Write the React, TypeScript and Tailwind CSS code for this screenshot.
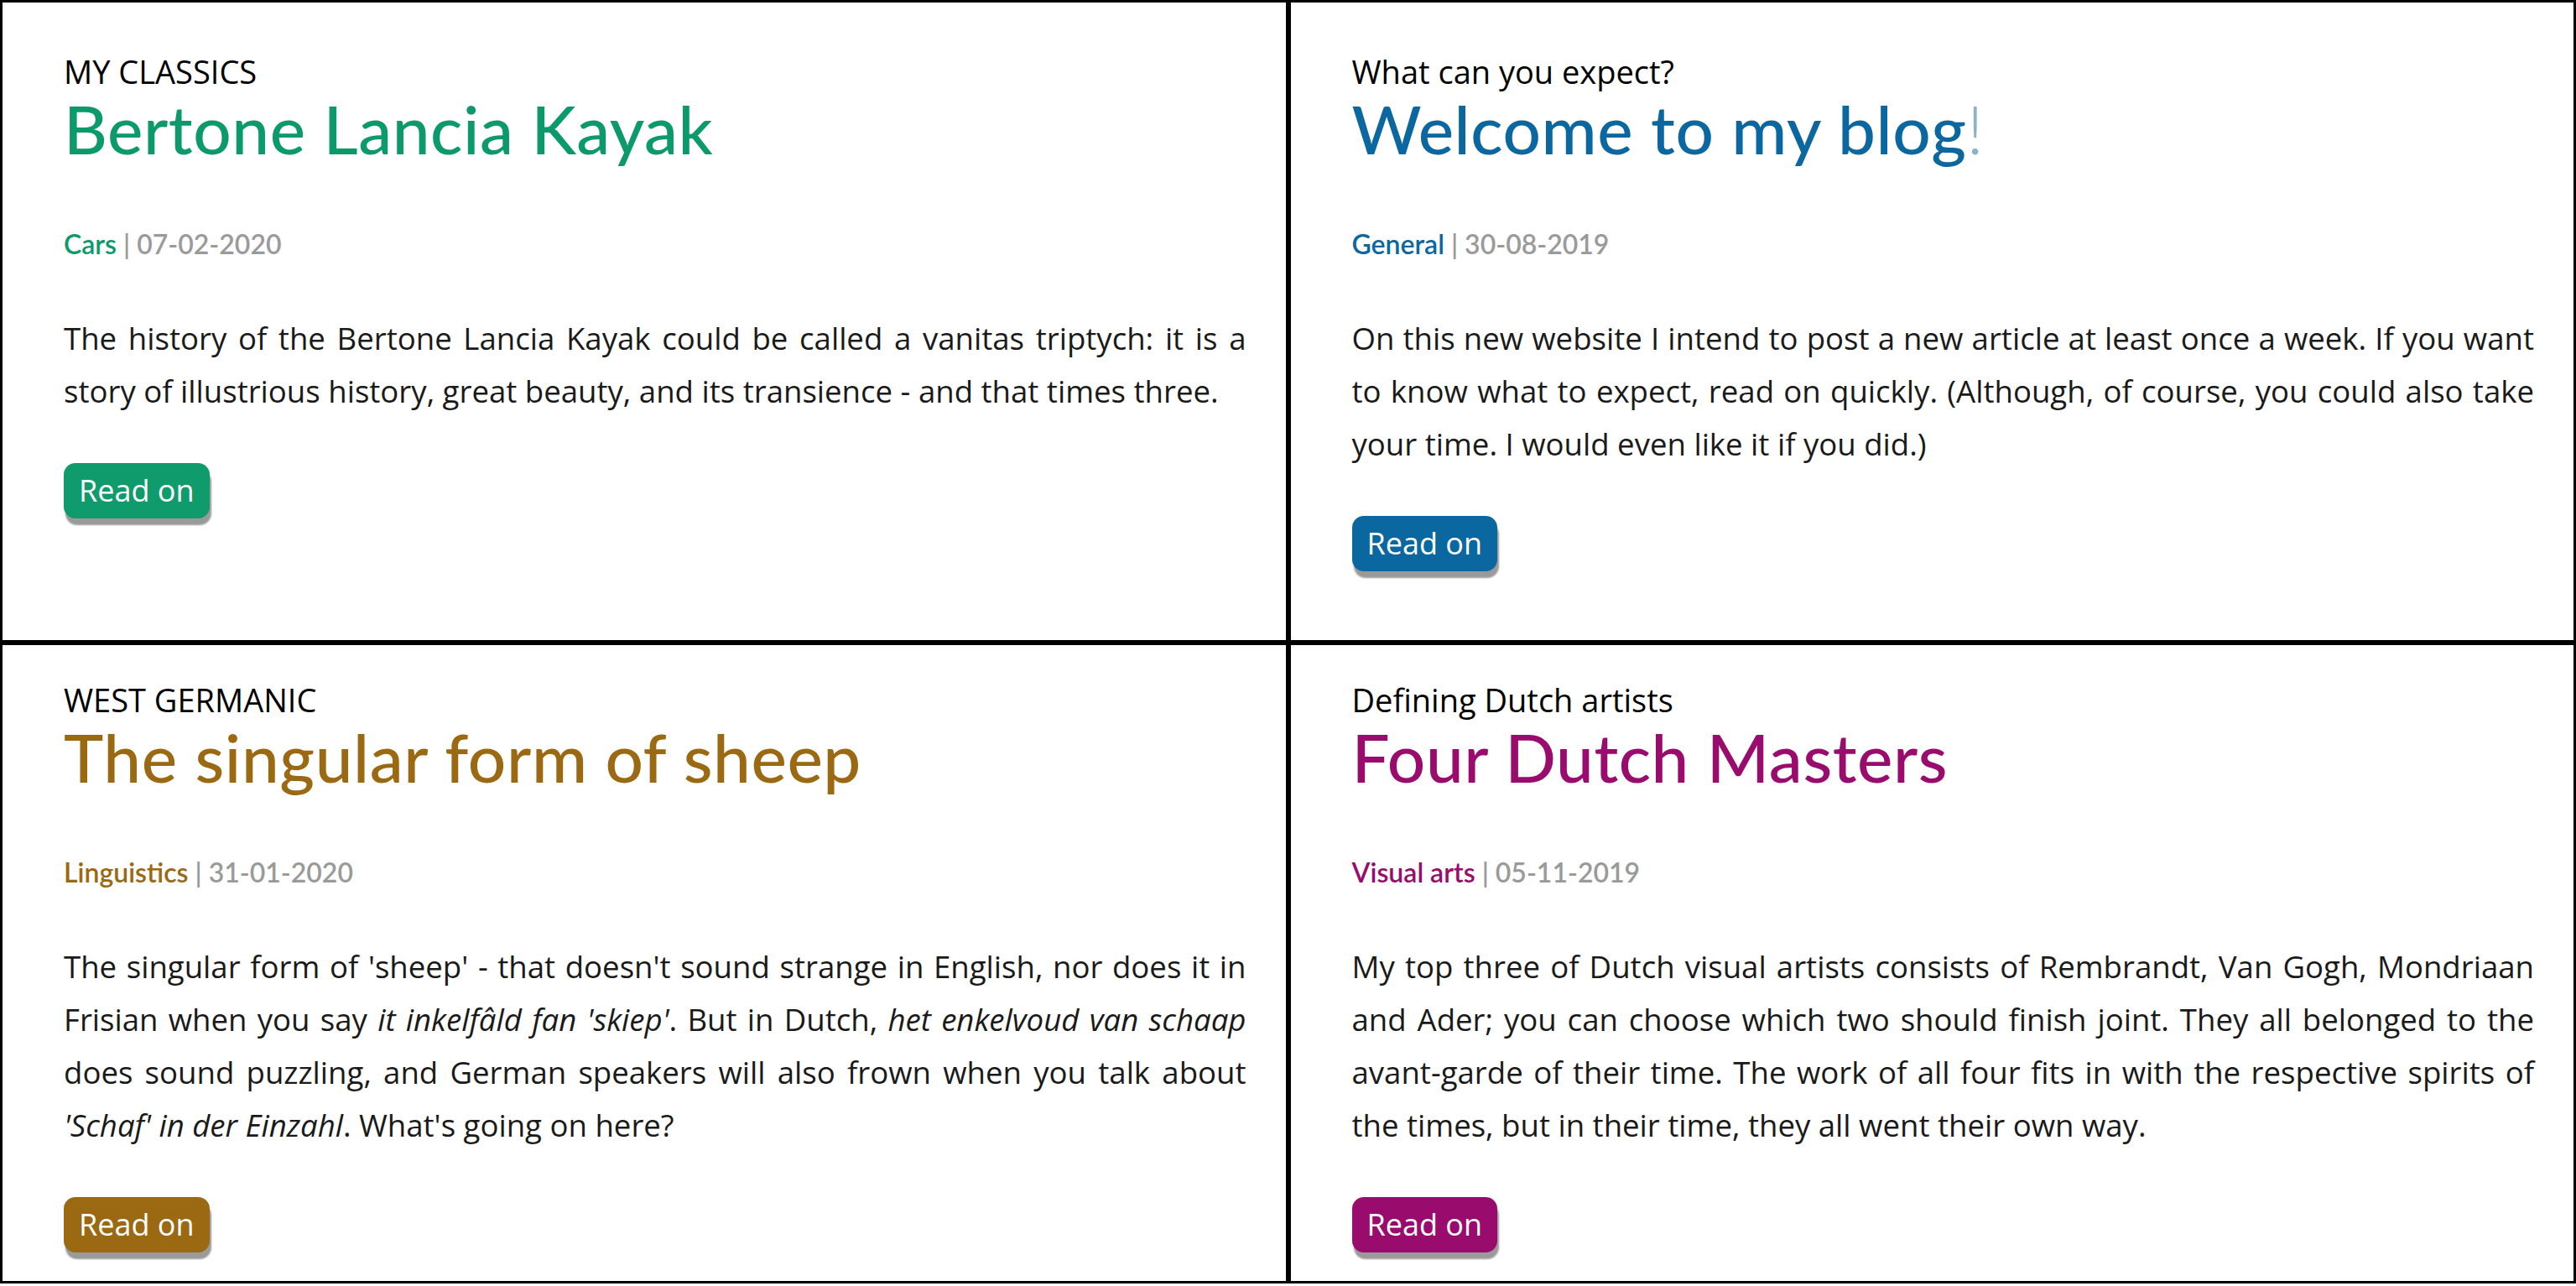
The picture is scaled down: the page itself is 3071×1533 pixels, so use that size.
import type { ReactNode } from "react";

type Post = {
  kicker: string;
  title: ReactNode;
  category: string;
  date: string;
  accent: string;
  button: string;
  body: ReactNode;
};

const posts: Post[] = [
  {
    kicker: "MY CLASSICS",
    title: "Bertone Lancia Kayak",
    category: "Cars",
    date: "07-02-2020",
    accent: "text-[#0c9a6b]",
    button: "bg-[#0f9b6c]",
    body: (
      <>
        The history of the Bertone Lancia Kayak could be called a vanitas triptych: it is a story of illustrious
        history, great beauty, and its transience - and that times three.
      </>
    ),
  },
  {
    kicker: "What can you expect?",
    title: (
      <>
        Welcome to my blog<span className="text-[#8db3cc] font-light">!</span>
      </>
    ),
    category: "General",
    date: "30-08-2019",
    accent: "text-[#0b679f]",
    button: "bg-[#0b679f]",
    body: (
      <>
        On this new website I intend to post a new article at least once a week. If you want to know what to
        expect, read on quickly. (Although, of course, you could also take your time. I would even like it if you
        did.)
      </>
    ),
  },
  {
    kicker: "WEST GERMANIC",
    title: "The singular form of sheep",
    category: "Linguistics",
    date: "31-01-2020",
    accent: "text-[#9a6912]",
    button: "bg-[#9a6912]",
    body: (
      <>
        The singular form of 'sheep' - that doesn't sound strange in English, nor does it in Frisian when you say{" "}
        <em>it inkelfâld fan 'skiep'</em>. But in Dutch, <em>het enkelvoud van schaap</em> does sound puzzling, and
        German speakers will also frown when you talk about <em>'Schaf' in der Einzahl</em>. What's going on here?
      </>
    ),
  },
  {
    kicker: "Defining Dutch artists",
    title: "Four Dutch Masters",
    category: "Visual arts",
    date: "05-11-2019",
    accent: "text-[#990c6d]",
    button: "bg-[#990c6d]",
    body: (
      <>
        My top three of Dutch visual artists consists of Rembrandt, Van Gogh, Mondriaan and Ader; you can choose
        which two should finish joint. They all belonged to the avant-garde of their time. The work of all four fits
        in with the respective spirits of the times, but in their time, they all went their own way.
      </>
    ),
  },
];

function PostCard({ post, top }: { post: Post; top: boolean }) {
  return (
    <article
      className={`border-[3px] border-black bg-white pl-[73px] pr-[47px] ${
        top ? "pt-[60px] pb-[82px]" : "pt-[43px] pb-[34px]"
      }`}
    >
      <p className="text-[38px] leading-[1.2] text-black">{post.kicker}</p>
      <h2 className={`font-['Lato',sans-serif] font-medium text-[80px] leading-[1.1] tracking-[0.6px] ${post.accent}`}>
        {post.title}
      </h2>
      <div className="mt-[75px] font-['Lato',sans-serif] font-semibold text-[32px] leading-[1.2]">
        <span className={post.accent}>{post.category}</span>
        <span className="text-[#9a9a9a]"> | {post.date}</span>
      </div>
      <p className="mt-[62px] text-[36.6px] leading-[63px] text-justify text-[#1a1a1a]">{post.body}</p>
      <div className="mt-[54px]">
        <button
          className={`rounded-[14px] px-[18px] pt-[9px] pb-[9px] text-[36px] leading-[48px] text-white shadow-[2px_8px_2px_#9a9a9a] ${post.button}`}
        >
          Read on
        </button>
      </div>
    </article>
  );
}

export default function App() {
  return (
    <div className="bg-white font-['Open_Sans',sans-serif]">
      <div className="grid grid-cols-2">
        {posts.map((post, i) => (
          <PostCard key={post.category} post={post} top={i < 2} />
        ))}
      </div>
    </div>
  );
}
